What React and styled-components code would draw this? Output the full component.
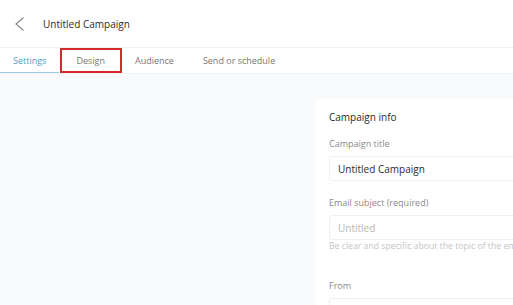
import React from 'react';
import styled, { createGlobalStyle } from 'styled-components';

const GlobalStyle = createGlobalStyle`
  html, body {
    margin: 0;
    padding: 0;
    background: #fff;
  }
  body {
    font-family: "Open Sans", "Liberation Sans", sans-serif;
    color: #333;
    overflow: hidden;
  }
`;

const Page = styled.div`
  width: 513px;
  height: 305px;
  overflow: hidden;
  display: flex;
  flex-direction: column;
  background: #f9fafb;
`;

const Header = styled.header`
  height: 47px;
  flex-shrink: 0;
  display: flex;
  align-items: center;
  padding-left: 15px;
  gap: 19px;
  background: #fff;
  border-bottom: 1px solid #f1f2f4;
`;

const BackButton = styled.button`
  border: none;
  background: none;
  padding: 0;
  width: 9px;
  height: 14px;
  display: flex;
  cursor: pointer;
`;

const Title = styled.h1`
  margin: 0;
  font-size: 10px;
  font-weight: 400;
  color: #2b2b2b;
`;

const Tabs = styled.nav`
  height: 25px;
  flex-shrink: 0;
  display: flex;
  background: #fff;
  border-bottom: 1px solid #f1f2f4;
`;

const Tab = styled.div`
  box-sizing: border-box;
  display: flex;
  align-items: center;
  justify-content: center;
  margin-left: ${p => (p.$highlight ? 1 : 0)}px;
  padding: 0 ${p => p.$padR || 13}px 0 ${p => p.$padL || 13}px;
  font-size: 9px;
  color: ${p => (p.$active ? '#4c9fc8' : '#777')};
  border-bottom: 1px solid ${p => (p.$active ? '#9fcbe0' : 'transparent')};
  outline: ${p => (p.$highlight ? '2px solid #d42a2f' : 'none')};
  outline-offset: -2px;
`;

const Body = styled.main`
  flex: 1;
  display: flex;
  justify-content: flex-end;
  padding-top: 25px;
`;

const Panel = styled.section`
  width: 197px;
  overflow: hidden;
  background: #fff;
  padding: 11px 0 0 13px;
  box-sizing: border-box;
  border-top-left-radius: 3px;
`;

const PanelTitle = styled.h2`
  margin: 0 0 14px;
  font-size: 10px;
  line-height: 14px;
  font-weight: 400;
  color: #2b2b2b;
`;

const Field = styled.div`
  margin-bottom: ${p => p.$gap || 16}px;
`;

const Label = styled.label`
  display: block;
  font-size: 9px;
  line-height: 12px;
  color: #8a8a8a;
  margin-bottom: 6px;
`;

const Input = styled.div`
  box-sizing: border-box;
  height: 25px;
  margin-right: -20px;
  border: 1px solid #eef0f2;
  border-right: none;
  border-radius: 3px 0 0 3px;
  display: flex;
  align-items: center;
  padding-left: 8px;
  font-size: 10px;
  color: ${p => (p.$placeholder ? '#b5b5b5' : '#2b2b2b')};
`;

const Help = styled.p`
  margin: 1px 0 0;
  font-size: 8.7px;
  line-height: 10px;
  color: #c4c4c4;
  white-space: nowrap;
`;

const Chevron = () => (
  <svg width="9" height="14" viewBox="0 0 9 14" fill="none">
    <path d="M8.5 0.5 L1 7 L8.5 13.5" stroke="#8a8a8a" strokeWidth="1.2" />
  </svg>
);

export default function App() {
  return (
    <Page>
      <GlobalStyle />
      <Header>
        <BackButton aria-label="Back">
          <Chevron />
        </BackButton>
        <Title>Untitled Campaign</Title>
      </Header>
      <Tabs>
        <Tab $active>Settings</Tab>
        <Tab $highlight $padL={16} $padR={17}>Design</Tab>
        <Tab $padR={16}>Audience</Tab>
        <Tab>Send or schedule</Tab>
      </Tabs>
      <Body>
        <Panel>
          <PanelTitle>Campaign info</PanelTitle>
          <Field>
            <Label>Campaign title</Label>
            <Input>Untitled Campaign</Input>
          </Field>
          <Field $gap={29}>
            <Label>Email subject (required)</Label>
            <Input $placeholder>Untitled</Input>
            <Help>Be clear and specific about the topic of the email</Help>
          </Field>
          <Field>
            <Label>From</Label>
            <Input />
          </Field>
        </Panel>
      </Body>
    </Page>
  );
}
